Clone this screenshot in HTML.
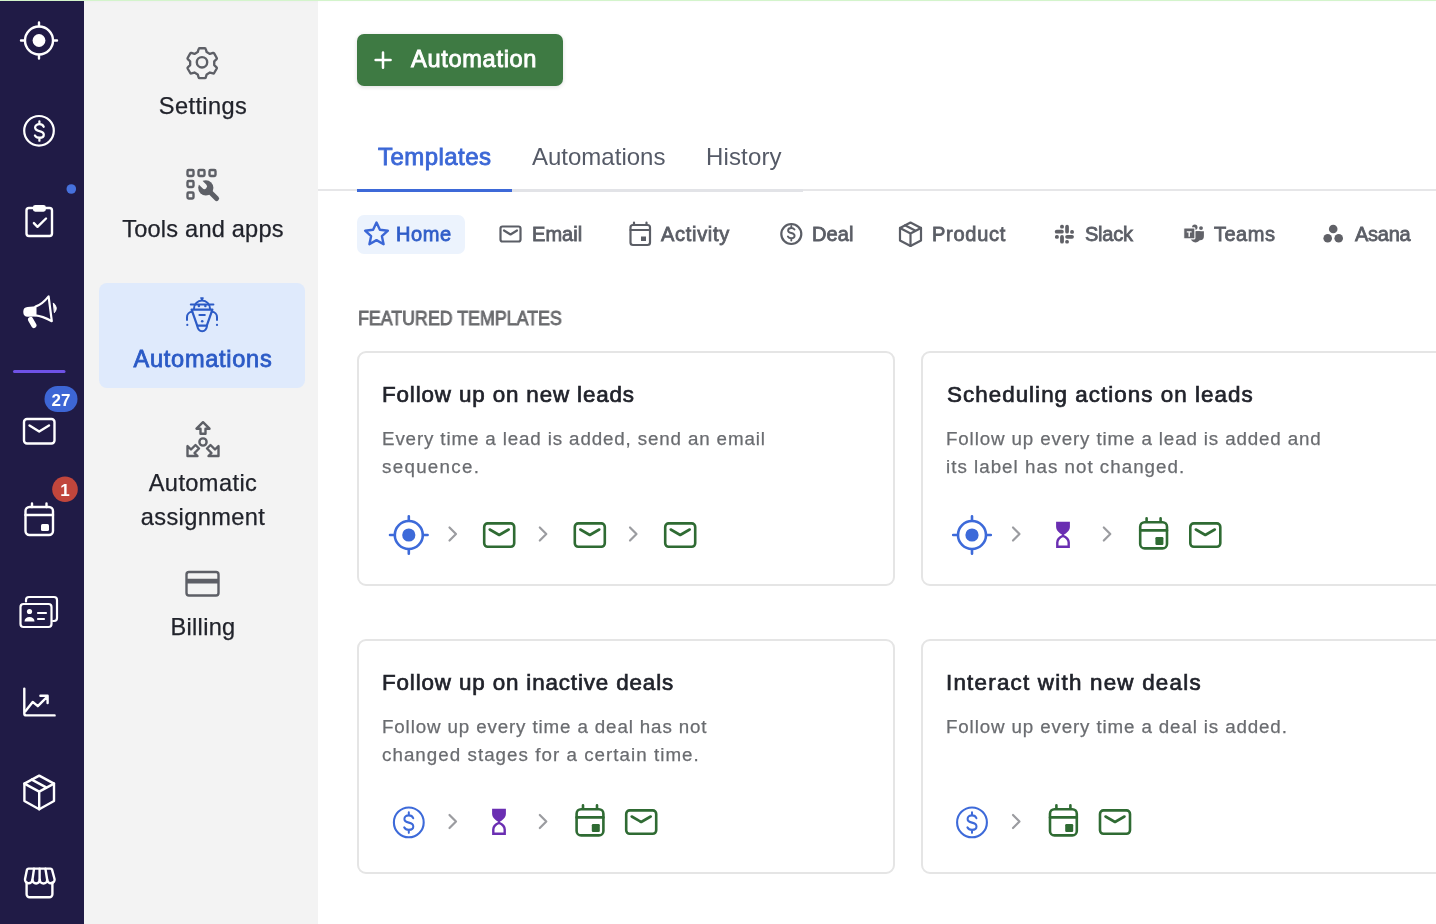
<!DOCTYPE html>
<html><head><meta charset="utf-8">
<style>
*{box-sizing:border-box;margin:0;padding:0}
html,body{width:1436px;height:924px;overflow:hidden;background:#fff;font-family:"Liberation Sans",sans-serif;}
.abs,.ptxt,.tab,.chip,.ct,.cd{will-change:transform}
.cd,.ptxt{-webkit-text-stroke:0.25px currentColor}
.abs{position:absolute;white-space:nowrap}
#topline{position:absolute;left:0;top:0;width:1436px;height:1px;background:#d3f4cb;z-index:5;box-shadow:0 1px 2px rgba(0,0,0,.03)}
#nav{position:absolute;left:0;top:1px;width:84px;height:923px;background:#201b46}
#panel{position:absolute;left:84px;top:1px;width:234px;height:923px;background:#f3f3f3}
.ptxt{position:absolute;left:85.8px;width:234px;text-align:center;font-size:23.6px;color:#21232b;line-height:1em;white-space:nowrap}
#hl{position:absolute;left:99px;top:283px;width:206px;height:105px;background:#dfeafc;border-radius:8px}
#btn{position:absolute;left:357px;top:34px;width:206px;height:52px;background:#3e7a43;border-radius:7px;box-shadow:0 1px 4px rgba(0,0,0,.13)}
.tab{position:absolute;top:144.5px;font-size:24px;line-height:1em;color:#555a67}
.chip{position:absolute;top:224px;font-size:20px;line-height:1em;letter-spacing:0.1px;font-weight:normal;-webkit-text-stroke:0.8px currentColor;color:#5b5e66;white-space:nowrap}
.card{position:absolute;width:538px;height:235px;border:2px solid #e5e5e5;border-radius:9px;background:#fff}
.ct{position:absolute;font-size:22.4px;font-weight:normal;-webkit-text-stroke:0.7px #21232b;color:#21232b;line-height:1em;white-space:nowrap;letter-spacing:0.86px}
.cd{position:absolute;font-size:18.75px;letter-spacing:0.87px;color:#6a6c70;line-height:28px;white-space:nowrap}
</style></head>
<body>
<div id="topline"></div>
<div id="nav"></div>
<svg class="abs" style="left:0;top:0" width="84" height="924" viewBox="0 0 84 924" fill="none" stroke="#fff" stroke-width="2.4" stroke-linecap="round" stroke-linejoin="round">
  <!-- target -->
  <circle cx="39" cy="40.5" r="14"/>
  <circle cx="39" cy="40.5" r="6.4" fill="#fff" stroke="none"/>
  <path d="M39 22.5v3.5M39 55v3.5M21 40.5h3.5M53.5 40.5h3.5"/>
  <!-- dollar -->
  <circle cx="39" cy="130.8" r="14.8" stroke-width="2.2"/>
  <path transform="translate(39.4 130.8) scale(0.86 0.92)" d="M5 -4.4C4.2 -6.2 2.5 -7.2 0 -7.2C-2.9 -7.2 -5 -5.6 -5 -3.5C-5 -1.2 -2.8 -0.3 0 0.3C2.9 0.9 5.1 1.9 5.1 4.2C5.1 6.4 2.8 7.6 0 7.6C-2.3 7.6 -4.3 6.6 -5.2 5.1M0 -10.3V-7.2M0 7.6V10.7" stroke-width="2.6"/>
  <!-- clipboard -->
  <rect x="26.5" y="208" width="25.5" height="28" rx="2.5"/>
  <rect x="34.1" y="206.2" width="10.6" height="4.3" rx="1.2" fill="#fff"/>
  <path d="M33.9 223.1l3.6 3.7 8.5-8.3"/>
  <!-- megaphone -->
  <path d="M35.6 306.3L27.5 307a4.6 4.6 0 0 0-4.2 4.6v.6a4.6 4.6 0 0 0 4.4 4.5L35.6 316.6z" fill="#fff" stroke="none"/>
  <path d="M35.4 306.6C40.5 305 45 301 48.6 296.4L51.8 321.2C47 318.6 41.5 316 35.4 315.4z" stroke-width="2.2"/>
  <path d="M53.6 303.2Q58.6 307.6 54.6 312.4z" fill="#fff" stroke-width="1"/>
  <path d="M30.6 319.6L33.9 325.4" stroke-width="5.2"/>
  <!-- purple line -->
  <path d="M14.5 371.5h49.5" stroke="#6f52e6" stroke-width="3"/>
  <!-- mail -->
  <rect x="24" y="419" width="30.5" height="24.5" rx="3"/>
  <path d="M29.5 425.5l9.7 6 9.8-6"/>
  <!-- calendar -->
  <rect x="25.5" y="507" width="27.5" height="28" rx="4"/>
  <path d="M25.5 515h27.5M32 503.5v3.5M46.5 503.5v3.5"/>
  <rect x="41" y="524" width="8" height="7" rx="1.5" fill="#fff" stroke="none"/>
  <!-- contacts -->
  <path d="M26 601.5v-1.5a3 3 0 0 1 3-3h25a3 3 0 0 1 3 3v18a3 3 0 0 1-3 3h-1" stroke-width="2.2"/>
  <rect x="20.5" y="604" width="31" height="23" rx="3" stroke-width="2.2"/>
  <circle cx="29.5" cy="611.5" r="2.6" fill="#fff" stroke="none"/>
  <path d="M24.5 621.5c0-3 2.2-4.5 5-4.5s5 1.5 5 4.5z" fill="#fff" stroke="none"/>
  <path d="M38 613h8M38 619h6" stroke-width="2.2"/>
  <!-- chart -->
  <path d="M24.3 688.6v24.8a2 2 0 0 0 2 2h28.3"/>
  <path d="M25.4 711.2l7.3-9.3 5.1 4.3 9-9M40.4 695.8h7.2v7.2"/>
  <!-- box -->
  <path d="M39.2 775.6L54 783.6V801L39.2 809.2L24.4 801V783.6Z"/>
  <path d="M24.4 783.6L39.2 791.6L54 783.6M39.2 791.6V809.2M31.8 779.6L46.6 787.6"/>
  <!-- store -->
  <path d="M26.6 882.5v11.8a3 3 0 0 0 3 3h19.8a3 3 0 0 0 3-3v-11.8"/>
  <path d="M28.6 868.6H50.4a1.8 1.8 0 0 1 1.7 1.3L54.6 879.2A3.7 3.7 0 0 1 47.2 879.8A3.7 3.7 0 0 1 39.8 879.8A3.7 3.7 0 0 1 32.4 879.8A3.7 3.7 0 0 1 25 879.2L26.9 869.9a1.8 1.8 0 0 1 1.7-1.3z"/>
  <path d="M34 868.8l-1.6 11M39.6 868.8v11M45.4 868.8l1.8 11"/>
  <!-- badges -->
  <circle cx="71.3" cy="189" r="4.8" fill="#4671dc" stroke="none"/>
  <rect x="44.5" y="386" width="33" height="26" rx="13" fill="#3d66d5" stroke="none"/>
  <text x="61" y="405.5" text-anchor="middle" fill="#fff" stroke="none" font-family="Liberation Sans" font-weight="bold" font-size="17">27</text>
  <circle cx="65" cy="489.3" r="12.8" fill="#c1463c" stroke="none"/>
  <text x="65" y="495.5" text-anchor="middle" fill="#fff" stroke="none" font-family="Liberation Sans" font-weight="bold" font-size="17">1</text>
</svg>

<div id="panel"></div>
<div id="hl"></div>
<svg class="abs" style="left:84px;top:0" width="234" height="924" viewBox="84 0 234 924" fill="none" stroke="#5d5f66" stroke-width="2.4" stroke-linecap="round" stroke-linejoin="round">
  <!-- gear -->
  <g transform="translate(202.2 62.2) scale(0.94) translate(-202 -62.3)" stroke-width="2.5"><path d="M199.2 47.5h5.6a1 1 0 0 1 1 .8l1 3.2 3.4 2 3.3-1a1 1 0 0 1 1.2.5l2.8 4.8a1 1 0 0 1-.2 1.2l-2.5 2.4v4l2.5 2.4a1 1 0 0 1 .2 1.2l-2.8 4.8a1 1 0 0 1-1.2.5l-3.3-1-3.4 2-1 3.2a1 1 0 0 1-1 .8h-5.6a1 1 0 0 1-1-.8l-1-3.2-3.4-2-3.3 1a1 1 0 0 1-1.2-.5l-2.8-4.8a1 1 0 0 1 .2-1.2l2.5-2.4v-4l-2.5-2.4a1 1 0 0 1-.2-1.2l2.8-4.8a1 1 0 0 1 1.2-.5l3.3 1 3.4-2 1-3.2a1 1 0 0 1 1-.8z"/></g>
  <circle cx="202" cy="62.3" r="5.2"/>
  <!-- tools -->
  <rect x="187.5" y="170" width="6" height="6" rx="1.2"/>
  <rect x="198.5" y="170" width="6" height="6" rx="1.2"/>
  <rect x="209.5" y="170" width="6" height="6" rx="1.2"/>
  <rect x="187.5" y="181" width="6" height="6" rx="1.2"/>
  <rect x="187.5" y="192.5" width="6" height="6" rx="1.2"/>
  <path d="M205.8 187.8L216.6 198.6" stroke-width="5"/>
  <circle cx="205.8" cy="187.8" r="7.6" fill="#5d5f66" stroke="none"/>
  <rect x="-2.6" y="-11" width="5.2" height="11.6" rx="2.6" fill="#f3f3f3" stroke="none" transform="translate(205.8 187.8) rotate(-45)"/>
  <!-- robot -->
  <g stroke="#2c5bc6" stroke-width="2" fill="none">
    <path d="M194 308.5a8 8 0 0 1 16 0"/>
    <path d="M202 300.5l-1.2-2.6h2.4z" fill="#2c5bc6" stroke-width="1.2"/>
    <path d="M190.8 304.6h22.6"/>
    <path d="M191.6 309.6h20.8l-5.6 16h-9.6z" stroke-width="2.2"/>
    <path d="M197.3 325.6a4.85 5.6 0 0 0 9.7 0"/>
    <path d="M192.2 311.8a5.5 5.5 0 0 0-5.2 5.5v2.8"/>
    <path d="M211.8 311.8a5.5 5.5 0 0 1 5.2 5.5v2.8"/>
    <path d="M199.4 315.1h5.4"/>
  </g>
  <g fill="#2c5bc6" stroke="none">
    <circle cx="198.9" cy="306" r="1.25"/>
    <circle cx="205.4" cy="306" r="1.25"/>
    <circle cx="202.2" cy="321.3" r="1.3"/>
    <circle cx="187.3" cy="324.9" r="1.1"/>
    <circle cx="217" cy="324.9" r="1.1"/>
  </g>
  <!-- automatic assignment -->
  <path d="M203 422.2l-6.5 6.5h4v5h5v-5h4z"/>
  <circle cx="203" cy="442" r="3.6"/>
  <path d="M187.5 446v10h10l-3-3 4.5-4.5-3.5-3.5-4.5 4.5z"/>
  <path d="M218.5 446v10h-10l3-3-4.5-4.5 3.5-3.5 4.5 4.5z"/>
  <!-- billing -->
  <rect x="186.5" y="572" width="32" height="23.5" rx="2.5"/>
  <path d="M186.5 581.2h32" stroke-width="4.8" stroke-linecap="butt"/>
</svg>
<div class="ptxt" style="top:95px;font-size:23.6px;letter-spacing:0.4px">Settings</div>
<div class="ptxt" style="top:217.5px;font-size:23.6px;letter-spacing:0.2px">Tools and apps</div>
<div class="ptxt" style="top:348px;font-size:23.6px;letter-spacing:0.7px;-webkit-text-stroke:0.8px #2b5ac6;color:#2b5ac6">Automations</div>
<div class="ptxt" style="top:466.4px;font-size:23.6px;line-height:34px;letter-spacing:0.4px">Automatic<br>assignment</div>
<div class="ptxt" style="top:616.4px;font-size:23.6px;letter-spacing:0.3px">Billing</div>

<!-- main -->
<div id="btn"></div>
<svg class="abs" style="left:373px;top:50px" width="20" height="20" viewBox="0 0 20 20" stroke="#fff" stroke-width="2.5" stroke-linecap="round"><path d="M10 2.6v15.2M2.6 10h15"/></svg>
<div class="abs" style="left:410.8px;top:47.8px;font-size:23.6px;line-height:1em;letter-spacing:0.68px;-webkit-text-stroke:0.9px #fff;color:#fff">Automation</div>

<div class="abs" style="left:318px;top:189px;width:1118px;height:2px;background:#e6e6e8"></div>
<div class="abs" style="left:357px;top:189px;width:446px;height:3.3px;background:#e2e3e7"></div>
<div class="abs" style="left:357px;top:189px;width:155px;height:3.3px;background:#3d69d8"></div>
<div class="tab" style="left:378px;top:145.2px;font-size:24px;letter-spacing:0.45px;-webkit-text-stroke:0.85px #3b67d6;color:#3b67d6">Templates</div>
<div class="tab" style="left:532px">Automations</div>
<div class="tab" style="left:706px;letter-spacing:0.15px">History</div>

<div class="abs" style="left:357px;top:215px;width:108px;height:38.5px;background:#ecf3fd;border-radius:7px"></div>
<svg class="abs" style="left:0;top:0" width="1436" height="300" viewBox="0 0 1436 300" fill="none" stroke="#5b5e66" stroke-width="2.2" stroke-linecap="round" stroke-linejoin="round">
  <!-- star -->
  <path d="M376.5 222.5l3.4 7.3 8 .9-6 5.5 1.7 8-7.1-4.1-7.1 4.1 1.7-8-6-5.5 8-.9z" stroke="#3b67d6" stroke-width="2.4"/>
  <!-- email -->
  <rect x="500.5" y="226.5" width="20" height="15" rx="2"/>
  <path d="M504 230.5l6.5 4 6.5-4"/>
  <!-- activity cal -->
  <rect x="630.5" y="225" width="19.5" height="20" rx="2.5"/>
  <path d="M630.5 230h19.5M634 222.5v2.5M646.5 222.5v2.5"/>
  <rect x="641" y="236.5" width="5" height="4.5" fill="#5b5e66" stroke="none"/>
  <!-- deal -->
  <circle cx="791.3" cy="234" r="10"/>
  <path d="M794.5 229.5c-.7-1-1.8-1.5-3.2-1.5-1.9 0-3.2 1-3.2 2.5s1.3 2.1 3.2 2.5c2 .5 3.3 1.1 3.3 2.7 0 1.5-1.4 2.5-3.3 2.5-1.5 0-2.8-.6-3.4-1.7M791.3 226v2M791.3 238.5v2" stroke-width="1.9"/>
  <!-- product -->
  <path d="M910.5 222.5l10.5 5.5v12.5l-10.5 5.5-10.5-5.5V228z"/>
  <path d="M900 228l10.5 5.5 10.5-5.5M910.5 233.5v12.5M905 225.3l10.5 5.5"/>
  <!-- slack -->
  <g stroke="none" fill="#606167">
    <rect x="1065.2" y="224.8" width="3.7" height="8.7" rx="1.85"/>
    <rect x="1060.1" y="224.8" width="3.8" height="3.8" rx="1.5"/>
    <rect x="1054.8" y="229.8" width="9" height="3.8" rx="1.9"/>
    <rect x="1070.2" y="229.9" width="3.7" height="3.8" rx="1.5"/>
    <rect x="1065.2" y="235" width="8.7" height="3.7" rx="1.85"/>
    <rect x="1055" y="235" width="3.8" height="3.7" rx="1.5"/>
    <rect x="1060.1" y="235" width="3.8" height="8.6" rx="1.9"/>
    <rect x="1065.2" y="239.9" width="3.7" height="3.7" rx="1.5"/>
  </g>
  <!-- teams -->
  <g stroke="none" fill="#626369">
    <circle cx="1194.8" cy="227.2" r="2.7"/>
    <circle cx="1201" cy="228.1" r="1.95"/>
    <path d="M1196 231.3H1203.9V236.2A3.4 3.4 0 0 1 1196 236.2Z"/>
    <path d="M1190.6 231.3H1200.4V237.6A4.9 4.9 0 0 1 1190.6 237.6Z"/>
    <rect x="1183.7" y="227.9" width="11.2" height="11" rx="0.8" stroke="#fff" stroke-width="1.1"/>
  </g>
  <path d="M1186.8 231.9h4.8M1189.2 231.9v4.8" stroke="#fff" stroke-width="1.4" stroke-linecap="butt"/>
  <!-- asana -->
  <g stroke="none" fill="#606167">
    <circle cx="1333.2" cy="229" r="4.3"/>
    <circle cx="1327.7" cy="238.2" r="4.3"/>
    <circle cx="1338.7" cy="238.2" r="4.3"/>
  </g>
</svg>
<div class="chip" style="left:396px;letter-spacing:0.6px;color:#2f5dc8">Home</div>
<div class="chip" style="left:532px;letter-spacing:0.05px">Email</div>
<div class="chip" style="left:661px;letter-spacing:0.7px">Activity</div>
<div class="chip" style="left:811.5px">Deal</div>
<div class="chip" style="left:932px;letter-spacing:0.75px">Product</div>
<div class="chip" style="left:1085px;letter-spacing:-0.25px">Slack</div>
<div class="chip" style="left:1214px;letter-spacing:0.5px">Teams</div>
<div class="chip" style="left:1354.5px;letter-spacing:-0.25px">Asana</div>

<div id="feat" class="abs" style="left:358px;top:309.3px;font-size:19.8px;line-height:1em;color:#6a6b6e;-webkit-text-stroke:0.85px #6a6b6e;transform:scaleX(0.90);transform-origin:0 0">FEATURED TEMPLATES</div>

<div class="card" style="left:357px;top:351px"></div>
<div class="card" style="left:921px;top:351px"></div>
<div class="card" style="left:357px;top:639px"></div>
<div class="card" style="left:921px;top:639px"></div>
<div class="ct" style="left:382px;top:384.1px">Follow up on new leads</div>
<div class="cd" style="left:382px;top:425.2px">Every time a lead is added, send an email<br><span style="letter-spacing:1.3px">sequence.</span></div>
<div class="ct" style="left:946.8px;top:384.1px;letter-spacing:1.03px">Scheduling actions on leads</div>
<div class="cd" style="left:945.6px;top:425.2px">Follow up every time a lead is added and<br><span style="letter-spacing:1.02px">its label has not changed.</span></div>
<div class="ct" style="left:382px;top:672.2px">Follow up on inactive deals</div>
<div class="cd" style="left:382px;top:713px">Follow up every time a deal has not<br><span style="letter-spacing:1.04px">changed stages for a certain time.</span></div>
<div class="ct" style="left:945.6px;top:672.2px;letter-spacing:1.22px">Interact with new deals</div>
<div class="cd" style="left:945.6px;top:713px">Follow up every time a deal is added.</div>

<svg class="abs" style="left:0;top:0" width="1436" height="924" viewBox="0 0 1436 924" fill="none" stroke-linecap="round" stroke-linejoin="round">
  <defs>
    <g id="tgt"><circle cx="0" cy="0" r="14" stroke="#3d6ad9" stroke-width="2.6"/><circle r="6.6" fill="#3d6ad9"/><path d="M0 -18.8v4.5M0 14.3v4.5M-18.8 0h4.5M14.3 0h4.5" stroke="#3d6ad9" stroke-width="2.6"/></g>
    <g id="arr"><path d="M-3.5 -6.5l6.5 6.5-6.5 6.5" stroke="#9b9ca0" stroke-width="2.2"/></g>
    <g id="mail"><rect x="-15" y="-11.6" width="30" height="23.4" rx="3.5" stroke="#2f6b33" stroke-width="2.6"/><path d="M-9.5 -5.5l9.5 5.5 9.5-5.5" stroke="#2f6b33" stroke-width="2.6"/></g>
    <g id="cal"><rect x="-13.4" y="-12.8" width="26.8" height="26.2" rx="4.5" stroke="#2f6b33" stroke-width="2.6"/><path d="M-13.4 -4.6h26.8M-7 -16.8v3M7 -16.8v3" stroke="#2f6b33" stroke-width="2.6"/><rect x="1.8" y="2" width="8" height="8" rx="1.2" fill="#2f6b33"/></g>
    <g id="hg"><path d="M-6.9 -13.2H6.9V-8.2C6.9 -4.2 3.2 -1.6 0 0.4C-3.2 -1.6 -6.9 -4.2 -6.9 -8.2Z" fill="#6a2eb2"/><path d="M-5.7 11.7V7.6C-5.7 4.2 -3 2.1 0 0.9C3 2.1 5.7 4.2 5.7 7.6V11.7Z" stroke="#6a2eb2" stroke-width="2.4" stroke-linejoin="miter"/></g>
    <g id="dol"><circle r="14.9" stroke="#3d6ad9" stroke-width="2.1"/><path transform="scale(0.88 0.97)" d="M5 -4.4C4.2 -6.2 2.5 -7.2 0 -7.2C-2.9 -7.2 -5 -5.6 -5 -3.5C-5 -1.2 -2.8 -0.3 0 0.3C2.9 0.9 5.1 1.9 5.1 4.2C5.1 6.4 2.8 7.6 0 7.6C-2.3 7.6 -4.3 6.6 -5.2 5.1M0 -10.3V-7.2M0 7.6V10.7" stroke="#3d6ad9" stroke-width="2.3"/></g>
  </defs>
  <use href="#tgt" x="408.8" y="535"/>
  <use href="#arr" x="453" y="534"/>
  <use href="#mail" x="499.2" y="535"/>
  <use href="#arr" x="543.3" y="534"/>
  <use href="#mail" x="589.8" y="535"/>
  <use href="#arr" x="633.5" y="534"/>
  <use href="#mail" x="680.2" y="535"/>

  <use href="#tgt" x="972" y="535"/>
  <use href="#arr" x="1016.5" y="534"/>
  <use href="#hg" x="1063" y="535"/>
  <use href="#arr" x="1107.3" y="534"/>
  <use href="#cal" x="1153.6" y="535"/>
  <use href="#mail" x="1205.3" y="535"/>

  <use href="#dol" x="408.8" y="822.4"/>
  <use href="#arr" x="453" y="821.5"/>
  <use href="#hg" x="499" y="822"/>
  <use href="#arr" x="543.3" y="821.5"/>
  <use href="#cal" x="590" y="822"/>
  <use href="#mail" x="641.2" y="822"/>

  <use href="#dol" x="972" y="822.4"/>
  <use href="#arr" x="1016.5" y="821.5"/>
  <use href="#cal" x="1063.4" y="822"/>
  <use href="#mail" x="1115" y="822"/>
</svg>
</body></html>
